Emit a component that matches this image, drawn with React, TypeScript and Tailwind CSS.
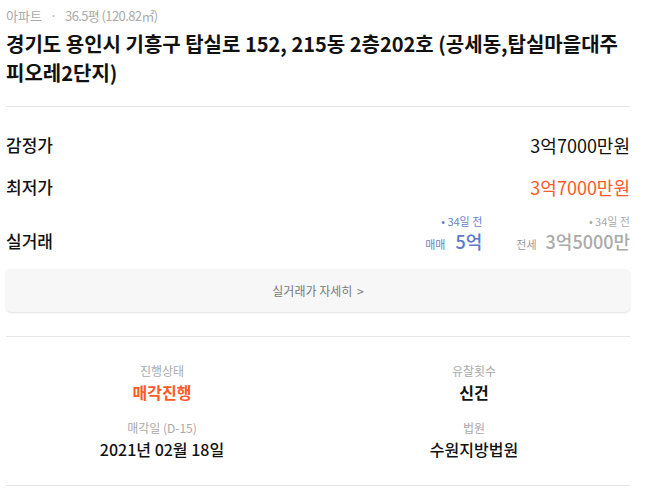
export default function App() {
  return (
    <div
      className="w-[648px] h-[498px] bg-white overflow-hidden text-[#111]"
      style={{ fontFamily: '"Noto Sans CJK KR", "Noto Sans", sans-serif' }}
    >
      <div className="pl-[6px] pr-[18px]">
        {/* header */}
        <div className="pt-[5px] text-[13px] leading-[22px] text-[#aaa]">
          아파트 <span className="mx-[5px]">·</span>{" "}
          <span className="tracking-[-0.6px]">36.5평 (120.82㎡)</span>
        </div>
        <h1 className="mt-[2px] text-[20px] leading-[29px] font-bold">
          경기도 용인시 기흥구 탑실로 152, 215동 2층202호 (공세동,탑실마을대주피오레2단지)
        </h1>
        <div className="mt-[19px] h-px bg-[#e5e5e5]" />

        {/* prices */}
        <div className="flex items-center justify-between h-[42px] mt-[17px]">
          <span className="text-[17px] font-medium">감정가</span>
          <span className="text-[18px]">3억7000만원</span>
        </div>
        <div className="flex items-center justify-between h-[42px]">
          <span className="text-[17px] font-medium">최저가</span>
          <span className="text-[18px] text-[#ff5a28]">3억7000만원</span>
        </div>
        <div className="flex items-end justify-between h-[48px] pb-[4px]">
          <span className="text-[17px] leading-[22px] font-medium">실거래</span>
          <div className="flex gap-[34px]">
            <div className="flex flex-col items-end">
              <span className="text-[11px] leading-[15px] mb-[1px] text-[#6b83c9]">• 34일 전</span>
              <div className="flex items-baseline gap-[10px]">
                <span className="text-[11px] leading-[15px] text-[#6b83c9]">매매</span>
                <span className="text-[18px] leading-[22px] font-medium text-[#5b79cc]">5억</span>
              </div>
            </div>
            <div className="flex flex-col items-end">
              <span className="text-[11px] leading-[15px] mb-[1px] text-[#aaa]">• 34일 전</span>
              <div className="flex items-baseline gap-[9px]">
                <span className="text-[11px] leading-[15px] text-[#999]">전세</span>
                <span className="text-[18px] leading-[22px] font-medium text-[#aaa]">3억5000만</span>
              </div>
            </div>
          </div>
        </div>

        {/* button */}
        <button className="mt-[13px] w-full h-[43px] rounded-[5px] bg-[#f7f7f7] shadow-[0_1px_2px_rgba(0,0,0,0.12)] text-[12px] text-[#777]">
          실거래가 자세히 <span className="ml-[2px]">&gt;</span>
        </button>
        <div className="mt-[24px] h-px bg-[#e5e5e5]" />

        {/* details */}
        <div className="grid grid-cols-2 gap-y-[15px] pt-[25px] pb-[24px] text-center">
          <div>
            <div className="text-[12px] leading-[18px] text-[#aaa]">진행상태</div>
            <div className="text-[16px] leading-[24px] font-bold text-[#ff5a28]">매각진행</div>
          </div>
          <div>
            <div className="text-[12px] leading-[18px] text-[#aaa]">유찰횟수</div>
            <div className="text-[16px] leading-[24px] font-bold">신건</div>
          </div>
          <div>
            <div className="text-[12px] leading-[18px] text-[#aaa]">매각일 (D-15)</div>
            <div className="text-[16px] leading-[24px] font-medium">2021년 02월 18일</div>
          </div>
          <div>
            <div className="text-[12px] leading-[18px] text-[#aaa]">법원</div>
            <div className="text-[16px] leading-[24px] font-medium">수원지방법원</div>
          </div>
        </div>
        <div className="h-px bg-[#e5e5e5]" />
      </div>
    </div>
  )
}
